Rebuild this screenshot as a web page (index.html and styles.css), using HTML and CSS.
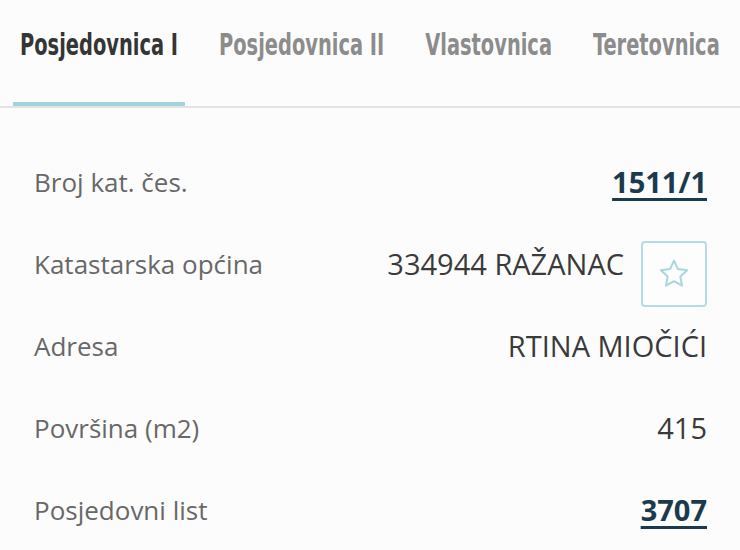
FILE: index.html
```html
<!DOCTYPE html>
<html lang="hr">
<head>
  <meta charset="UTF-8" />
  <meta name="viewport" content="width=device-width, initial-scale=1.0"/>
  <title>Posjedovnica</title>
  <link rel="stylesheet" href="styles.css">
</head>
<body>

  <nav class="tabs">
    <a class="tab active"><span>Posjedovnica I</span></a>
    <a class="tab"><span>Posjedovnica II</span></a>
    <a class="tab"><span>Vlastovnica</span></a>
    <a class="tab"><span>Teretovnica</span></a>
  </nav>

  <div class="details">
    <div class="row">
      <span class="label">Broj kat. čes.</span>
      <a class="value link">1511/1</a>
    </div>

    <div class="row">
      <span class="label">Katastarska općina</span>
      <div class="value-group">
        <span class="value">334944 RAŽANAC</span>
        <button class="fav" title="Dodaj u favorite">
          <svg width="38" height="38" viewBox="0 0 24 24" fill="none" stroke="#a6d6de" stroke-width="1.25" stroke-linejoin="round">
            <path d="M12 3.6l2.5 5.3 5.8.7-4.3 4 1.1 5.8-5.1-2.9-5.1 2.9 1.1-5.8-4.3-4 5.8-.7z"/>
          </svg>
        </button>
      </div>
    </div>

    <div class="row">
      <span class="label">Adresa</span>
      <span class="value">RTINA MIOČIĆI</span>
    </div>

    <div class="row">
      <span class="label">Površina (m2)</span>
      <span class="value">415</span>
    </div>

    <div class="row">
      <span class="label">Posjedovni list</span>
      <a class="value link">3707</a>
    </div>
  </div>

</body>
</html>
```

FILE: styles.css
```css
* {
  box-sizing: border-box;
}

body {
  margin: 0;
  background: #fcfcfc;
  font-family: "Open Sans", Lato, sans-serif;
}

/* tab bar */

.tabs {
  display: flex;
  gap: 27px;
  padding: 0 0 0 13px;
  border-bottom: 2px solid #e3e3e3;
  white-space: nowrap;
  overflow: hidden;
}

.tab {
  display: block;
  padding: 28px 7px 40px;
  font-family: "DejaVu Sans Condensed", "DejaVu Sans", sans-serif;
  font-weight: 700;
  font-size: 21.6px;
  line-height: 34px;
  color: #8c8c8c;
  border-bottom: 6px solid transparent;
  margin-bottom: -2px;
  cursor: pointer;
}

.tab span {
  display: inline-block;
  transform: scaleY(1.4);
}

.tab.active {
  color: #353535;
  border-bottom-color: #a3d4de;
}

/* detail rows */

.details {
  padding: 54px 33px 0 34px;
}

.row {
  display: flex;
  justify-content: space-between;
  align-items: flex-start;
  height: 82px;
}

.label {
  font-size: 26px;
  line-height: 40px;
  color: #686868;
}

.value {
  font-size: 29px;
  line-height: 40px;
  color: #3a3a3a;
}

.link {
  color: #1c3a4d;
  font-weight: 700;
  text-decoration: underline;
  text-decoration-thickness: 3px;
  text-underline-offset: 5px;
  cursor: pointer;
}

.value-group {
  display: flex;
  align-items: flex-start;
  gap: 17px;
}

.fav {
  width: 66px;
  height: 66px;
  margin-top: -3px;
  border: 2px solid #b3dde3;
  border-radius: 4px;
  background: #fdfdfd;
  display: flex;
  align-items: center;
  justify-content: center;
  padding: 0;
  cursor: pointer;
}
```
